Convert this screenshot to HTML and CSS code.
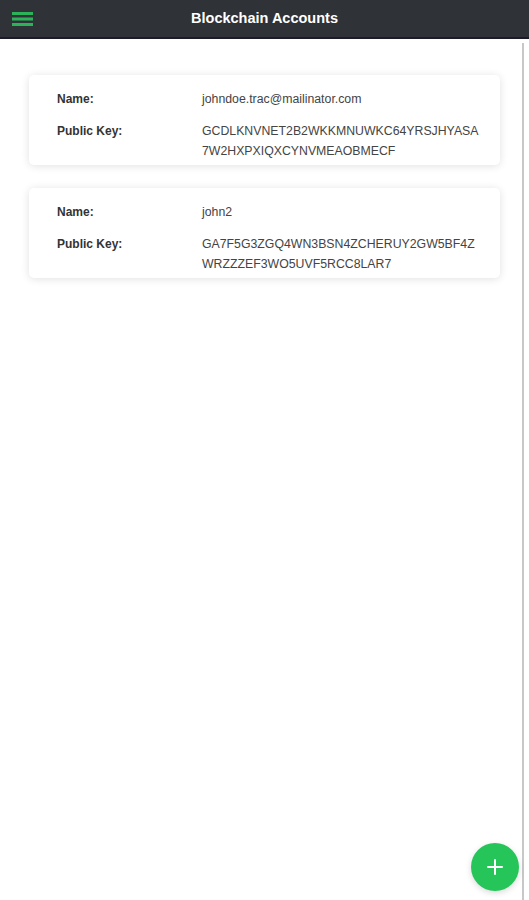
FILE: index.html
```html
<!DOCTYPE html>
<html>
<head>
<meta charset="utf-8">
<link rel="stylesheet" href="styles.css">
</head>
<body>
<header class="topbar">
  <button class="menu" aria-label="Menu">
    <svg width="22" height="16" viewBox="0 0 22 16"><rect x="0" y="1" width="21" height="3" fill="#2bb35a"/><rect x="0" y="6.5" width="21" height="3" fill="#2bb35a"/><rect x="0" y="12" width="21" height="3" fill="#2bb35a"/></svg>
  </button>
  <h1 class="title">Blockchain Accounts</h1>
</header>
<div class="frame">
  <main class="content">
    <section class="card">
      <div class="row"><div class="label">Name:</div><div class="value">johndoe.trac@mailinator.com</div></div>
      <div class="row"><div class="label">Public Key:</div><div class="value key">GCDLKNVNET2B2WKKMNUWKC64YRSJHYASA7W2HXPXIQXCYNVMEAOBMECF</div></div>
    </section>
    <section class="card">
      <div class="row"><div class="label">Name:</div><div class="value">john2</div></div>
      <div class="row"><div class="label">Public Key:</div><div class="value key">GA7F5G3ZGQ4WN3BSN4ZCHERUY2GW5BF4ZWRZZZEF3WO5UVF5RCC8LAR7</div></div>
    </section>
  </main>
  <div class="scrollbar"></div>
</div>
<button class="fab" aria-label="Add">
  <svg width="18" height="18" viewBox="0 0 18 18"><path d="M9 2v14M2 9h14" stroke="#fff" stroke-width="2" stroke-linecap="round"/></svg>
</button>
</body>
</html>
```
FILE: styles.css
```css
html, body {
  margin: 0;
  padding: 0;
  height: 100%;
  background: #fff;
  font-family: "Liberation Sans", Arial, sans-serif;
}
body {
  display: flex;
  flex-direction: column;
}
.topbar {
  height: 37px;
  background: #2f3237;
  border-bottom: 2px solid #1c1c28;
  display: flex;
  align-items: center;
  position: relative;
  flex: none;
}
.menu {
  background: none;
  border: 0;
  padding: 0;
  margin-left: 12px;
  width: 22px;
  height: 16px;
  display: flex;
}
.title {
  position: absolute;
  left: 0;
  right: 0;
  top: 0;
  margin: 0;
  line-height: 37px;
  text-align: center;
  color: #fff;
  font-size: 14.5px;
  font-weight: bold;
  pointer-events: none;
}
.frame {
  flex: 1;
  display: flex;
  min-width: 0;
}
.content {
  flex: 1;
  min-width: 0;
  padding: 36px 22px 0 29px;
  display: flex;
  flex-direction: column;
  gap: 23px;
}
.scrollbar {
  flex: none;
  width: 2px;
  margin: 4px 5px 0 0;
  background: #c8c8c8;
}
.card {
  background: #fff;
  border-radius: 5px;
  box-shadow: 0 1px 8px rgba(0,0,0,0.12);
  padding: 14px 10px 4px 28px;
  display: flex;
  flex-direction: column;
  gap: 12px;
}
.row {
  display: flex;
  font-size: 12px;
  line-height: 20px;
}
.label {
  width: 145px;
  flex: none;
  color: #333;
  font-weight: bold;
}
.value {
  width: 279px;
  font-size: 12.3px;
  color: #444;
  word-break: break-all;
}
.fab {
  position: fixed;
  left: 471px;
  top: 843px;
  width: 48px;
  height: 48px;
  border-radius: 50%;
  border: 0;
  background: #25c55a;
  box-shadow: 0 2px 6px rgba(0,0,0,0.15);
  display: flex;
  align-items: center;
  justify-content: center;
  padding: 0;
}
```
